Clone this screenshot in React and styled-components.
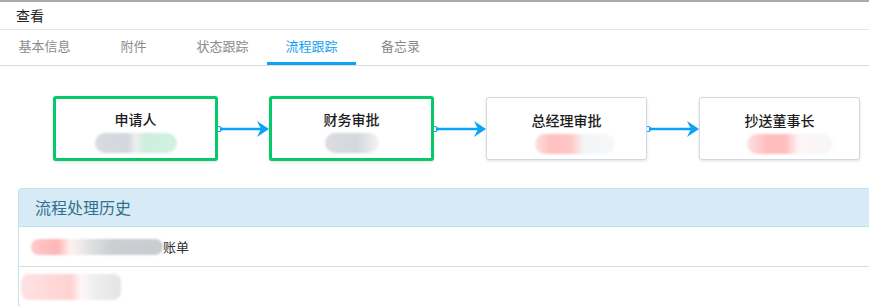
import React from 'react';
import styled, { createGlobalStyle } from 'styled-components';

const GlobalStyle = createGlobalStyle`
  html, body {
    margin: 0;
    padding: 0;
    background: #fff;
    font-family: "Noto Sans CJK SC", "Noto Sans", sans-serif;
    overflow: hidden;
  }
`;

const Page = styled.div`
  width: 869px;
  height: 306px;
  border-top: 2px solid #a9a9a9;
  box-sizing: border-box;
  overflow: hidden;
`;

const Title = styled.div`
  height: 27px;
  line-height: 26px;
  padding-left: 16px;
  font-size: 14px;
  color: #222;
  border-bottom: 1px solid #e4e4e4;
`;

const Tabs = styled.div`
  display: flex;
  height: 35px;
  border-bottom: 1px solid #d7dde2;
`;

const Tab = styled.div`
  width: 89px;
  text-align: center;
  font-size: 13px;
  line-height: 32px;
  color: ${({ active }) => (active ? '#12a0f0' : '#8a8a8a')};
  border-bottom: 3px solid ${({ active }) => (active ? '#0aa3f7' : 'transparent')};
  box-sizing: border-box;
  height: 35px;
`;

const Flow = styled.div`
  display: flex;
  align-items: center;
  padding: 30px 0 0 53px;
  height: 65px;
`;

const Node = styled.div`
  width: ${({ done }) => (done ? '165px' : '161px')};
  height: ${({ done }) => (done ? '65px' : '63px')};
  box-sizing: border-box;
  border: ${({ done }) => (done ? '3px solid #07c96b' : '1px solid #cfdae6')};
  border-radius: 3px;
  box-shadow: 0 1px 3px rgba(0, 0, 0, 0.12);
  display: flex;
  flex-direction: column;
  align-items: center;
  padding-top: ${({ done }) => (done ? '10px' : '12px')};
  background: #fff;
  flex-shrink: 0;
`;

const NodeName = styled.div`
  font-size: 14px;
  font-weight: 500;
  color: #1c1c1c;
  line-height: 20px;
`;

const Blur = styled.div`
  margin-top: 4px;
  margin-left: ${({ shift }) => shift || 0}px;
  width: ${({ w }) => w}px;
  height: 20px;
  border-radius: 10px;
  background: ${({ bg }) => bg};
  filter: blur(1px);
`;

const Arrow = styled.svg`
  flex-shrink: 0;
  display: block;
`;

const Panel = styled.div`
  margin: 27px 0 0 18px;
  border: 1px solid #bfe4ee;
  border-right: none;
  border-radius: 4px 0 0 4px;
  overflow: hidden;
`;

const PanelHead = styled.div`
  height: 37px;
  line-height: 37px;
  padding-left: 16px;
  background: #d6ebf5;
  color: #31708f;
  font-size: 16px;
  border-bottom: 1px solid #bfe4ee;
`;

const Row = styled.div`
  height: 39px;
  display: flex;
  align-items: center;
  padding-left: ${({ pad }) => pad}px;
  font-size: 13px;
  color: #333;
  border-top: ${({ first }) => (first ? 'none' : '1px solid #dcdcdc')};
`;

const RowBlur = styled.div`
  width: ${({ w }) => w}px;
  height: ${({ h }) => h}px;
  border-radius: 8px;
  background: ${({ bg }) => bg};
  filter: blur(1px);
`;

const tabs = ['基本信息', '附件', '状态跟踪', '流程跟踪', '备忘录'];

const steps = [
  { name: '申请人', done: true, w: 82, shift: 0, bg: 'linear-gradient(90deg,#d8dbe0 0%,#d3d7de 40%,#eef0f2 50%,#cdeedd 60%,#d2f2e2 100%)' },
  { name: '财务审批', done: true, w: 54, shift: 0, bg: 'linear-gradient(90deg,#dadde1 0%,#d4d8de 60%,#f2f3f4 100%)' },
  { name: '总经理审批', done: false, w: 80, shift: 16, bg: 'linear-gradient(90deg,#fde0e0 0%,#ffc0c0 20%,#ffc6c6 45%,#f4f5f6 60%,#f6f7f8 100%)' },
  { name: '抄送董事长', done: false, w: 86, shift: 20, bg: 'linear-gradient(90deg,#ffe0e0 0%,#ffbcbc 25%,#ffc0c0 45%,#fff5f5 60%,#f6f7f8 100%)' },
];

const FlowArrow = ({ w }) => (
  <Arrow width={w} height="20" viewBox={`0 0 ${w} 20`}>
    <circle cx="1" cy="10" r="2.5" fill="#fff" stroke="#0aa3f7" strokeWidth="1.2" />
    <line x1="2" y1="10" x2={w - 6} y2="10" stroke="#0aa3f7" strokeWidth="2.5" />
    <path d={`M${w - 12} 2 L${w} 10 L${w - 12} 18 L${w - 8} 10 Z`} fill="#0aa3f7" />
  </Arrow>
);

const App = () => (
  <Page>
    <GlobalStyle />
    <Title>查看</Title>
    <Tabs>
      {tabs.map((t, i) => (
        <Tab key={t} active={i === 3}>
          {t}
        </Tab>
      ))}
    </Tabs>
    <Flow>
      {steps.map((s, i) => (
        <React.Fragment key={s.name}>
          {i > 0 && <FlowArrow w={i === 1 ? 51 : 52} />}
          <Node done={s.done}>
            <NodeName>{s.name}</NodeName>
            <Blur w={s.w} shift={s.shift} bg={s.bg} />
          </Node>
        </React.Fragment>
      ))}
    </Flow>
    <Panel>
      <PanelHead>流程处理历史</PanelHead>
      <Row first pad={12}>
        <RowBlur w={132} h={16} bg="linear-gradient(90deg,#ffcaca 0%,#ffb5b5 20%,#fff2f2 30%,#dfe0e1 45%,#cbcfd2 60%,#c9ccd0 100%)" />
        <span>账单</span>
      </Row>
      <Row pad={2}>
        <RowBlur w={100} h={26} bg="linear-gradient(90deg,#ffe2e2 0%,#ffd2d2 50%,#fff6f6 60%,#eeeeef 75%,#e3e4e6 100%)" />
      </Row>
    </Panel>
  </Page>
);

export default App;
